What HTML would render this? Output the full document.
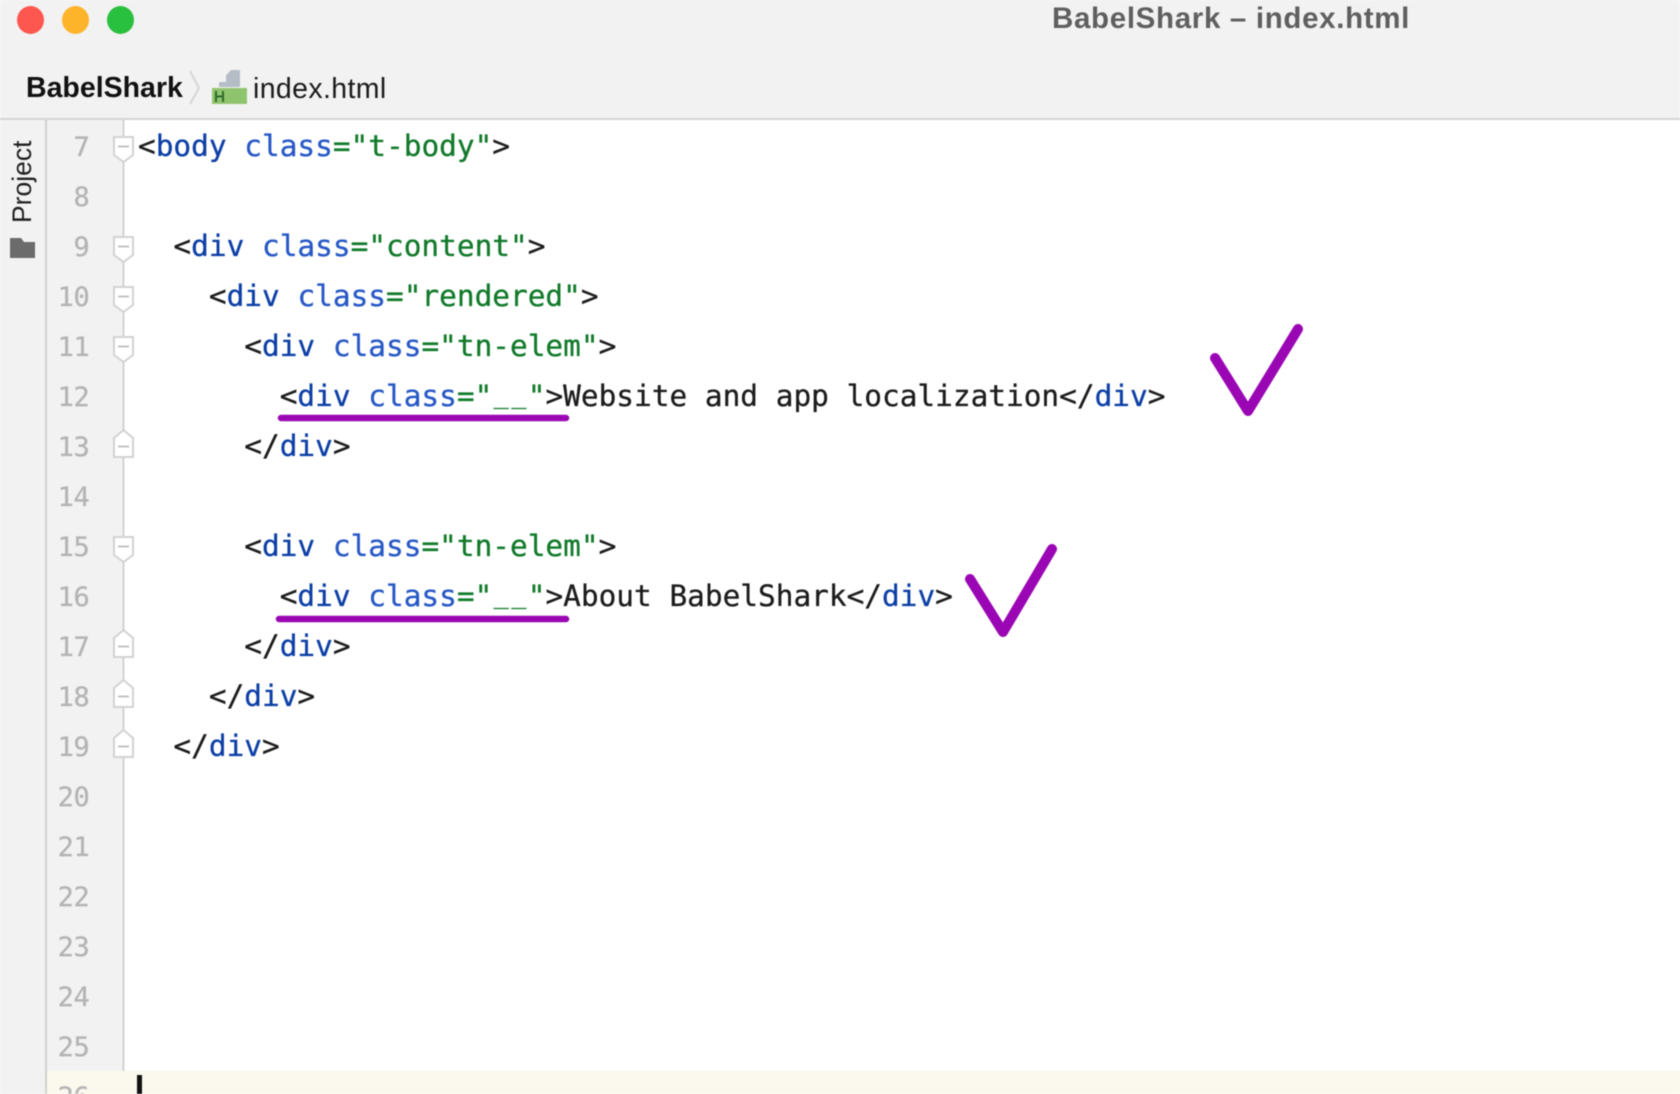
<!DOCTYPE html>
<html><head><meta charset="utf-8"><title>BabelShark – index.html</title>
<style>
html,body{margin:0;padding:0;background:#fff}
#r{position:relative;width:1680px;height:1094px;overflow:hidden;background:#fff;filter:blur(.55px)}
.a{position:absolute}
.s{font-family:"Liberation Sans",sans-serif;white-space:nowrap}
.l{position:absolute;left:138px;height:50px;line-height:50px;white-space:pre;font-family:"DejaVu Sans Mono","Liberation Mono",monospace;font-size:29.43px;color:#1c1c1c;-webkit-text-stroke:.3px currentColor}
.n{position:absolute;left:46px;width:43.500px;text-align:right;height:50px;line-height:50px;font-family:"DejaVu Sans Mono",monospace;font-size:27px;letter-spacing:-.3px;color:#b4b4b4;-webkit-text-stroke:.3px currentColor;margin-top:2px}
b{font-weight:normal;color:#0c3fa6}
i{font-style:normal;color:#2758c6}
u{text-decoration:none;color:#117a2a}
.us{display:inline-block;width:17.720px;text-align:center;font-size:25px;position:relative;top:-3px;line-height:30px}
</style></head><body><div id="r">
<div class="a" style="left:0;top:0;width:1680px;height:118px;background:#f2f2f2"></div>
<div class="a" style="left:0;top:118px;width:1680px;height:2px;background:#d4d4d4"></div>
<div class="a" style="left:0;top:120px;width:45px;height:974px;background:#f2f2f2"></div>
<div class="a" style="left:45px;top:120px;width:2px;height:974px;background:#d0d0d0"></div>
<div class="a" style="left:47px;top:120px;width:76px;height:974px;background:#f2f2f3"></div>
<div class="a" style="left:47px;top:1071px;width:1633px;height:23px;background:#fbf9ed"></div>

<div class="a" style="left:16.500px;top:6px;width:27px;height:28px;border-radius:50%;background:#fd5750"></div>
<div class="a" style="left:62px;top:6px;width:27px;height:28px;border-radius:50%;background:#fdb42b"></div>
<div class="a" style="left:107px;top:6px;width:27px;height:28px;border-radius:50%;background:#2ac03f"></div>
<div class="a s" style="left:1052px;top:2px;height:34px;line-height:34px;font-size:29.5px;letter-spacing:.67px;font-weight:bold;color:#5f5f5f">BabelShark – index.html</div>
<div class="a s" style="left:26px;top:71px;height:34px;line-height:34px;font-size:28.5px;font-weight:bold;color:#111">BabelShark</div>
<div class="a s" style="left:253px;top:71.500px;height:34px;line-height:34px;font-size:28.5px;letter-spacing:.37px;color:#1a1a1a">index.html</div>
<svg class="a" style="left:0;top:0" width="1680" height="1094" viewBox="0 0 1680 1094" fill="none">
<path d="M190 71L199 88L190 104" stroke="#d6d6d6" stroke-width="2"/>
<path d="M219 87V83L231 70H240V87Z" fill="#b4bdc6"/>
<path d="M219 82L226 75V82Z" fill="#f2f2f2"/>
<rect x="212" y="88" width="35" height="16" fill="#8fc46e"/>
<path d="M216 91V102M223 91V102M216 96.500H223" stroke="#2f6b2a" stroke-width="2"/>
<path d="M10 238H21L24 242H35V258H10Z" fill="#6b6b6b"/>
<path d="M123.500 120V1071" stroke="#cfcfcf" stroke-width="1.800"/>
<g fill="#fff" stroke="#d2d2d2" stroke-width="2">
<path d="M114 137H133V155L123.500 162L114 155Z"/>
<path d="M114 237H133V255L123.500 262L114 255Z"/>
<path d="M114 287H133V305L123.500 312L114 305Z"/>
<path d="M114 337H133V355L123.500 362L114 355Z"/>
<path d="M114 537H133V555L123.500 562L114 555Z"/>
<path d="M114 438L123.500 430L133 438V457H114Z"/>
<path d="M114 638L123.500 630L133 638V657H114Z"/>
<path d="M114 688L123.500 680L133 688V707H114Z"/>
<path d="M114 738L123.500 730L133 738V757H114Z"/>
</g>
<path d="M118 146.500H129M118 246.500H129M118 296.500H129M118 346.500H129M118 546.500H129M118 446.500H129M118 646.500H129M118 696.500H129M118 746.500H129" stroke="#bdbdbd" stroke-width="1.800"/>
</svg>
<div class="a s" style="left:-19.500px;top:167px;width:82px;height:30px;line-height:30px;text-align:center;font-size:26.5px;color:#222;transform:rotate(-90deg)">Project</div>

<div class="n" style="top:121px">7</div>
<div class="n" style="top:171px">8</div>
<div class="n" style="top:221px">9</div>
<div class="n" style="top:271px">10</div>
<div class="n" style="top:321px">11</div>
<div class="n" style="top:371px">12</div>
<div class="n" style="top:421px">13</div>
<div class="n" style="top:471px">14</div>
<div class="n" style="top:521px">15</div>
<div class="n" style="top:571px">16</div>
<div class="n" style="top:621px">17</div>
<div class="n" style="top:671px">18</div>
<div class="n" style="top:721px">19</div>
<div class="n" style="top:771px">20</div>
<div class="n" style="top:821px">21</div>
<div class="n" style="top:871px">22</div>
<div class="n" style="top:921px">23</div>
<div class="n" style="top:971px">24</div>
<div class="n" style="top:1021px">25</div>
<div class="n" style="top:1071px">26</div>

<div class="l" style="top:121px">&lt;<b>body</b> <i>class</i><u>="t-body"</u>&gt;</div>
<div class="l" style="top:221px">  &lt;<b>div</b> <i>class</i><u>="content"</u>&gt;</div>
<div class="l" style="top:271px">    &lt;<b>div</b> <i>class</i><u>="rendered"</u>&gt;</div>
<div class="l" style="top:321px">      &lt;<b>div</b> <i>class</i><u>="tn-elem"</u>&gt;</div>
<div class="l" style="top:371px">        &lt;<b>div</b> <i>class</i><u>="<span class="us">_</span><span class="us">_</span>"</u>&gt;Website and app localization&lt;/<b>div</b>&gt;</div>
<div class="l" style="top:421px">      &lt;/<b>div</b>&gt;</div>
<div class="l" style="top:521px">      &lt;<b>div</b> <i>class</i><u>="tn-elem"</u>&gt;</div>
<div class="l" style="top:571px">        &lt;<b>div</b> <i>class</i><u>="<span class="us">_</span><span class="us">_</span>"</u>&gt;About BabelShark&lt;/<b>div</b>&gt;</div>
<div class="l" style="top:621px">      &lt;/<b>div</b>&gt;</div>
<div class="l" style="top:671px">    &lt;/<b>div</b>&gt;</div>
<div class="l" style="top:721px">  &lt;/<b>div</b>&gt;</div>
<div class="a" style="left:137px;top:1075px;width:4.500px;height:19px;background:#111"></div>

<svg class="a" style="left:0;top:0" width="1680" height="1094" viewBox="0 0 1680 1094" fill="none" stroke="#9a06b4" stroke-linecap="round" stroke-linejoin="round">
<path d="M1215 358L1248 411L1298 329" stroke-width="10"/>
<path d="M970 579L1003 632L1052 549" stroke-width="10"/>
<path d="M281 418H566" stroke-width="6.500"/>
<path d="M279 619H566" stroke-width="6.500"/>
</svg>
</div></body></html>
